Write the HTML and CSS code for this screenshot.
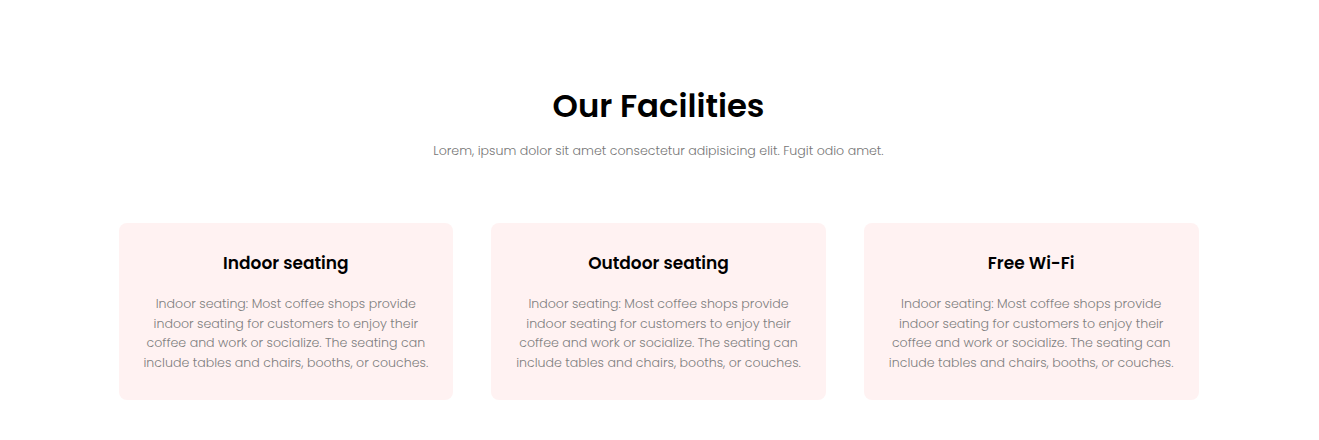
FILE: index.html
```html
<!DOCTYPE html>
<html lang="en">
<head>
<meta charset="utf-8">
<title>Our Facilities</title>
<link rel="stylesheet" href="styles.css">
</head>
<body>
<section class="facilities">
  <h2 class="facilities-title">Our Facilities</h2>
  <p class="facilities-sub">Lorem, ipsum dolor sit amet consectetur adipisicing elit. Fugit odio amet.</p>
  <div class="cards">
    <div class="card">
      <h3 class="card-title">Indoor seating</h3>
      <p class="card-text">Indoor seating: Most coffee shops provide indoor seating for customers to enjoy their coffee and work or socialize. The seating can include tables and chairs, booths, or couches.</p>
    </div>
    <div class="card">
      <h3 class="card-title">Outdoor seating</h3>
      <p class="card-text">Indoor seating: Most coffee shops provide indoor seating for customers to enjoy their coffee and work or socialize. The seating can include tables and chairs, booths, or couches.</p>
    </div>
    <div class="card">
      <h3 class="card-title">Free Wi-Fi</h3>
      <p class="card-text">Indoor seating: Most coffee shops provide indoor seating for customers to enjoy their coffee and work or socialize. The seating can include tables and chairs, booths, or couches.</p>
    </div>
  </div>
</section>
</body>
</html>
```
FILE: styles.css
```css
* { box-sizing: border-box; }
body {
  margin: 0;
  background: #fff;
  font-family: Poppins, "Open Sans", "Noto Sans", sans-serif;
  color: #000;
}
.facilities {
  padding: 84px 2px 40px 0;
  display: flex;
  flex-direction: column;
  align-items: center;
}
.facilities-title {
  margin: 0;
  font-size: 32.3px;
  font-weight: 600;
  line-height: 44px;
  color: #000;
}
.facilities-sub {
  margin: 13px 0 0;
  font-size: 12.6px;
  font-weight: 300;
  color: #777;
  line-height: 20px;
}
.cards {
  margin-top: 62px;
  width: 1080px;
  display: flex;
  gap: 38px;
}
.card {
  flex: 1;
  background: #fff2f2;
  border-radius: 8px;
  padding: 27px 20px 27px;
  text-align: center;
}
.card-title {
  margin: 0;
  font-size: 17px;
  font-weight: 600;
  line-height: 26px;
  color: #000;
}
.card-text {
  margin: 18px 0 0;
  font-size: 12.6px;
  font-weight: 300;
  line-height: 19.7px;
  color: #808080;
}
```
